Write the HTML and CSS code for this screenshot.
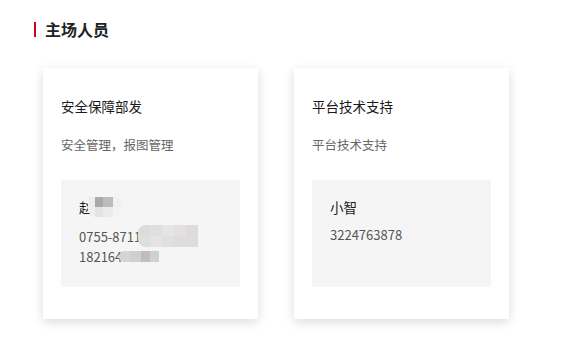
FILE: index.html
```html
<!DOCTYPE html>
<html lang="zh-CN">
<head>
    <meta charset="UTF-8">
    <meta name="viewport" content="width=device-width, initial-scale=1.0">
    <title>主场人员</title>
    <link rel="stylesheet" href="styles.css">
</head>
<body>
    <div class="page">
        <div class="section_title">
            <span class="bar"></span>
            <h3>主场人员</h3>
        </div>

        <div class="card_list">
            <div class="card">
                <div class="card_title">安全保障部发</div>
                <div class="card_desc">安全管理，报图管理</div>
                <div class="contact">
                    <div class="contact_name">赵<span class="mosaic m_name">
                        <i style="background:#eeeeee"></i><i style="background:#a9a9a9"></i><i style="background:#bcbcbc"></i><i style="background:#f1f1f3"></i>
                        <i style="background:#f0f0f0"></i><i style="background:#e3e3e3"></i><i style="background:#ebebeb"></i><i style="background:#f3f3f4"></i>
                    </span></div>
                    <div class="contact_phone">0755-8711<span class="mosaic m_phone1">
                        <i style="background:#dcdcdc"></i><i style="background:#e0dede"></i><i style="background:#e4e5e7"></i><i style="background:#e3e0df"></i><i style="background:#dcdcdf"></i>
                        <i style="background:#dedede"></i><i style="background:#e6e3e1"></i><i style="background:#e0dfdf"></i><i style="background:#dedcdc"></i><i style="background:#dcdde0"></i>
                    </span></div>
                    <div class="contact_phone">182164<span class="mosaic m_phone2">
                        <i style="background:#d4d4d4"></i><i style="background:#cfcfcf"></i><i style="background:#c2bcbc"></i><i style="background:#cdd1d2"></i>
                    </span></div>
                </div>
            </div>

            <div class="card">
                <div class="card_title">平台技术支持</div>
                <div class="card_desc">平台技术支持</div>
                <div class="contact">
                    <div class="contact_name">小智</div>
                    <div class="contact_phone">3224763878</div>
                </div>
            </div>
        </div>
    </div>
</body>
</html>
```

FILE: styles.css
```css
*{
    margin: 0;
    padding: 0;
    box-sizing: border-box;
}
html, body{
    height: 100%;
}
body{
    background: #ffffff;
    font-family: "Microsoft YaHei", "Noto Sans CJK SC", "Noto Sans", sans-serif;
    color: #222222;
}
.page{
    padding: 20px 0 27px 34px;
}
.section_title{
    display: flex;
    align-items: center;
    height: 18px;
}
.bar{
    width: 2px;
    height: 15px;
    background: #d0021b;
    margin-right: 9px;
}
.section_title h3{
    font-size: 16px;
    font-weight: bold;
    color: #222222;
    line-height: 18px;
}
.card_list{
    display: flex;
    gap: 36px;
    margin: 30px 0 0 9px;
}
.card{
    width: 215px;
    height: 251px;
    padding: 28px 18px 32px;
    background: #ffffff;
    box-shadow: 0 3px 10px rgba(0, 0, 0, 0.14);
}
.card_title{
    font-size: 13.5px;
    line-height: 20px;
    color: #1a1a1a;
}
.card_desc{
    font-size: 12.5px;
    line-height: 20px;
    color: #666666;
    margin-top: 19px;
}
.contact{
    height: 107px;
    margin-top: 25px;
    background: #f5f5f5;
    padding: 17px 18px 0;
}
.contact_name{
    font-size: 13.5px;
    line-height: 20px;
    color: #1a1a1a;
    display: flex;
    align-items: center;
    margin-bottom: 8px;
}
.contact_phone{
    font-size: 13px;
    line-height: 19px;
    color: #555555;
    display: flex;
    align-items: center;
}
.mosaic{
    display: grid;
}
.mosaic i{
    display: block;
}
.m_name{
    grid-template-columns: 7px 8px 10px 9px;
    grid-template-rows: 10px 10px;
    margin-left: -5px;
    border-radius: 0 8px 8px 8px;
    overflow: hidden;
}
.m_phone1{
    grid-template-columns: 12px 12px 12px 12px 12px;
    grid-template-rows: 11px 11px;
    margin-left: -3px;
    border-radius: 8px 0 0 8px;
    overflow: hidden;
}
.m_phone2{
    grid-template-columns: 11px 11px 9px 9px;
    grid-template-rows: 11px;
    margin-left: -3px;
    border-radius: 6px 0 0 6px;
    overflow: hidden;
}
```
